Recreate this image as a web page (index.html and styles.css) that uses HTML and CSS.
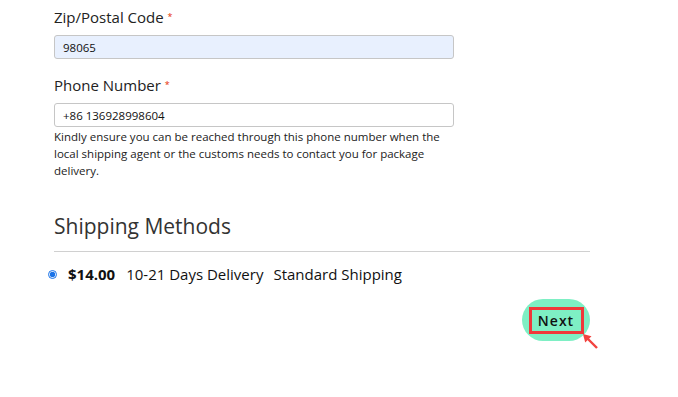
FILE: index.html
```html
<!DOCTYPE html>
<html lang="en">
  <head>
    <meta charset="UTF-8" />
    <meta name="viewport" content="width=device-width, initial-scale=1.0" />
    <title>Shipping Address</title>
    <link rel="stylesheet" href="styles.css">
  </head>
  <body>
    <div class="container">
      <div class="field">
        <label class="label">Zip/Postal Code <span class="req">*</span></label>
        <input type="text" class="input autofill" value="98065" />
      </div>

      <div class="field">
        <label class="label">Phone Number <span class="req">*</span></label>
        <input type="text" class="input" value="+86 136928998604" />
        <p class="hint">
          Kindly ensure you can be reached through this phone number when the
          local shipping agent or the customs needs to contact you for package
          delivery.
        </p>
      </div>

      <h2 class="section-title">Shipping Methods</h2>
      <label class="method">
        <input type="radio" name="shipping" checked />
        <span class="price">$14.00</span>
        <span class="days">10-21 Days Delivery</span>
        <span class="carrier">Standard Shipping</span>
      </label>

      <div class="actions">
        <div class="highlight">
          <button class="next">Next</button>
        </div>
        <svg class="pointer" width="16" height="16" viewBox="0 0 16 16">
          <line x1="4" y1="4" x2="14" y2="14" stroke="#f2433f" stroke-width="2.4" />
          <polygon points="0,0 8.5,2.2 2.2,8.5" fill="#f2433f" />
        </svg>
      </div>
    </div>
  </body>
</html>
```

FILE: styles.css
```css
body {
  font-family: "Open Sans", "Noto Sans", sans-serif;
  margin: 0;
  background: #fff;
  color: #222;
}
.container {
  width: 546px;
  padding: 6px 0 0 54px;
}
.field {
  margin-bottom: 15px;
}
.label {
  display: block;
  font-size: 15px;
  line-height: 22px;
  margin-bottom: 7px;
  color: #222;
}
.req {
  color: #e62e04;
  font-size: 9px;
  vertical-align: 3px;
}
.input {
  display: block;
  box-sizing: border-box;
  width: 400px;
  height: 24px;
  padding: 0 8px;
  border: 1px solid #c6c6c6;
  border-radius: 3px;
  font-family: inherit;
  font-size: 11.5px;
  color: #111;
  background: #fff;
}
.autofill {
  background: #e8f0fe;
}
.hint {
  margin: 1px 0 0;
  width: 400px;
  font-size: 11.5px;
  line-height: 17px;
  color: #222;
}
.section-title {
  margin: 32px 10px 0 0;
  padding-bottom: 10px;
  border-bottom: 1px solid #d0d0d0;
  font-size: 21px;
  font-weight: normal;
  line-height: 30px;
  color: #333;
}
.method {
  display: flex;
  align-items: center;
  gap: 9px;
  margin: 11px 0 0 -6px;
  font-size: 15px;
  line-height: 22px;
  color: #111;
}
.method input {
  width: 9px;
  height: 9px;
  margin: 0 2px 0 0;
  accent-color: #1a73e8;
}
.price {
  font-weight: bold;
  margin-right: 2px;
}
.carrier {
  margin-left: 1px;
}
.actions {
  position: relative;
  display: flex;
  justify-content: flex-end;
  margin-top: 14px;
  padding: 0 10px 10px 0;
}
.highlight {
  display: flex;
  align-items: center;
  justify-content: center;
  width: 68px;
  height: 42px;
  border-radius: 21px;
  background: #7eefc4;
}
.next {
  box-sizing: border-box;
  width: 55px;
  height: 27px;
  border: 3px solid #f0383a;
  background: transparent;
  font-family: inherit;
  font-size: 14px;
  font-weight: 600;
  letter-spacing: 1px;
  color: #111;
  cursor: pointer;
}
.pointer {
  position: absolute;
  right: 1px;
  top: 35px;
  display: block;
}
```
